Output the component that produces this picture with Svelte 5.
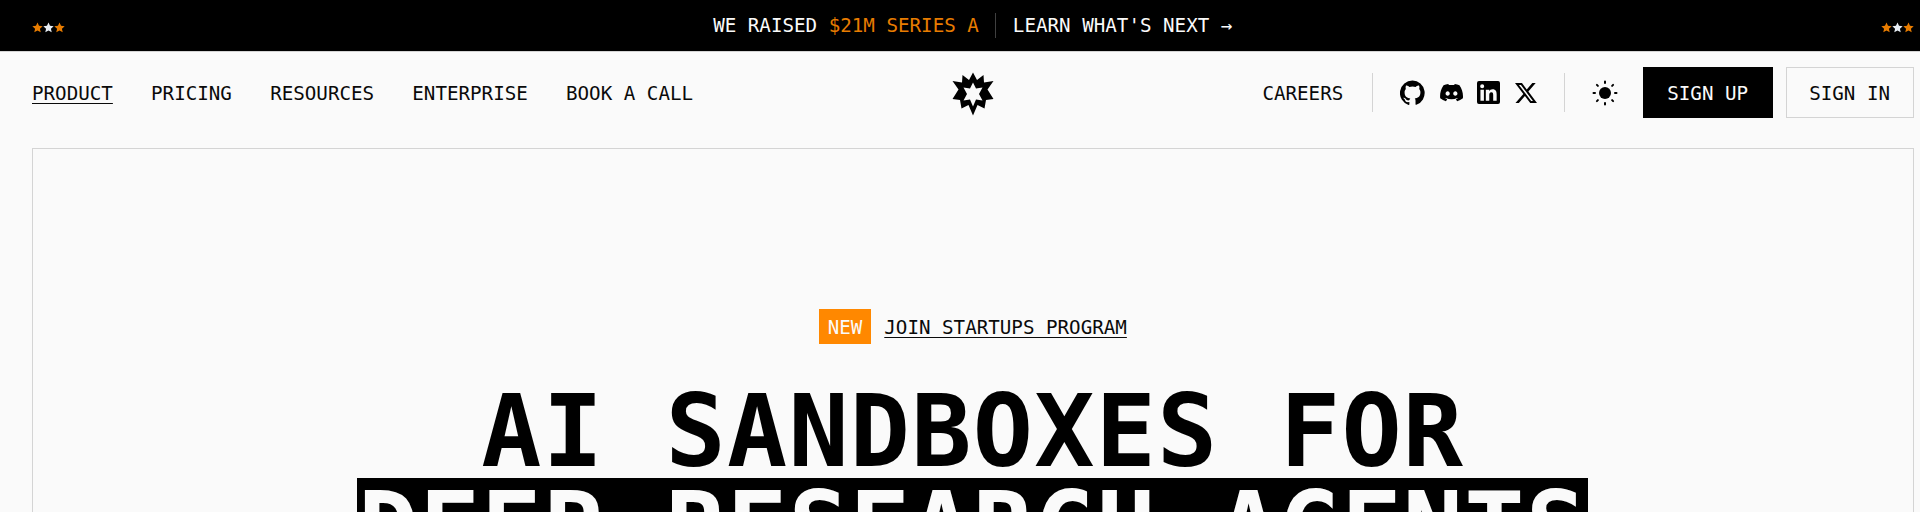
<script>
  const left = ['PRODUCT', 'PRICING', 'RESOURCES', 'ENTERPRISE', 'BOOK A CALL'];
  const starColors = ['#e87c00', '#e8eef5', '#e87c00'];
</script>

{#snippet stars()}
  <span class="stars">
    {#each starColors as c}
      <svg viewBox="0 0 24 24" width="11" height="11" fill={c}><path d="M12 1l3.300 7.400 8 .8-6 5.400 1.700 7.900-7-4.100-7 4.100 1.700-7.900-6-5.400 8-.8z"/></svg>
    {/each}
  </span>
{/snippet}

<div class="page">
  <div class="banner">
    {@render stars()}
    <div class="msg">
      <span>WE RAISED <b>$21M SERIES A</b></span>
      <span class="vr"></span>
      <span>LEARN WHAT'S NEXT →</span>
    </div>
    {@render stars()}
  </div>

  <nav>
    <div class="links">
      {#each left as l, i}
        <a class:active={i === 0} href="#x">{l}</a>
      {/each}
    </div>
    <svg class="logo" viewBox="10.500 5.500 44 46" width="44" height="46" aria-hidden="true">
      <path fill-rule="evenodd" d="M32.500 7L36.500 14.500L43 9.500L43.500 17L53 15.500L47 24L53 33.500L45.500 34.500L44 43L37 39.500L32.500 50L28 39.500L21 43L19.500 34.500L12 33.500L18 24L12 15.500L21.500 17L22 9.500L28.500 14.500ZM32.500 17L29.500 23L23 22L26.500 28.500L23 35L29.500 34L32.500 41L35.500 34L42 35L38.500 28.500L42 22L35.500 23Z"/>
    </svg>
    <div class="right">
      <a class="careers" href="#x">CAREERS</a>
      <span class="sep"></span>
      <div class="social">
        <svg viewBox="0 0 24 24" width="25" height="25"><path d="M12 .5a12 12 0 0 0-3.800 23.400c.6.100.8-.3.800-.6v-2.100c-3.300.7-4-1.600-4-1.600-.5-1.400-1.300-1.800-1.300-1.800-1.100-.7.100-.7.100-.7 1.200.1 1.800 1.200 1.800 1.200 1.100 1.800 2.800 1.300 3.500 1 .1-.8.400-1.300.8-1.600-2.700-.3-5.500-1.300-5.500-5.900 0-1.300.5-2.400 1.200-3.200-.1-.3-.5-1.500.1-3.200 0 0 1-.3 3.300 1.200a11.500 11.500 0 0 1 6 0c2.300-1.500 3.300-1.200 3.300-1.200.7 1.700.2 2.900.1 3.200.8.800 1.200 1.900 1.200 3.200 0 4.600-2.800 5.600-5.500 5.900.4.400.8 1.100.8 2.200v3.300c0 .3.200.7.800.6A12 12 0 0 0 12 .5z"/></svg>
        <svg viewBox="0 0 24 24" width="23" height="23"><path d="M20.300 4.400A19.800 19.800 0 0 0 15.400 3l-.6 1.300a18.300 18.300 0 0 0-5.500 0L8.600 3a19.700 19.700 0 0 0-4.900 1.400C.6 9 -.3 13.600.2 18.100a19.900 19.900 0 0 0 6 3c.5-.7.900-1.300 1.300-2-.7-.3-1.400-.6-2-1l.5-.4a14.200 14.200 0 0 0 12.100 0l.5.400c-.6.400-1.300.7-2 1 .4.700.8 1.300 1.300 2a19.800 19.800 0 0 0 6-3c.5-5.200-.9-9.700-3.600-13.700zM8 15.400c-1.200 0-2.200-1.100-2.200-2.400S6.800 10.600 8 10.600 10.200 11.700 10.200 13 9.200 15.400 8 15.400zm8 0c-1.200 0-2.200-1.100-2.200-2.400s1-2.400 2.200-2.400 2.200 1.100 2.200 2.400-1 2.400-2.200 2.400z"/></svg>
        <svg viewBox="0 0 24 24" width="23" height="23"><path fill-rule="evenodd" d="M2 0h20a2 2 0 0 1 2 2v20a2 2 0 0 1-2 2H2a2 2 0 0 1-2-2V2a2 2 0 0 1 2-2zM3.600 9v11.500h3.600V9zM5.400 3.400a2.100 2.100 0 1 0 0 4.200 2.100 2.100 0 0 0 0-4.200zM9.200 9v11.500h3.600v-5.700c0-1.500.3-3 2.200-3s1.900 1.800 1.900 3.100v5.600h3.600v-6.300c0-3.100-.7-5.500-4.300-5.500-1.700 0-2.900 1-3.400 1.900V9z"/></svg>
        <svg viewBox="0 0 24 24" width="22" height="22"><path fill-rule="evenodd" d="M18.900 1.200h3.700l-8 9.200L24 22.800h-7.400l-5.800-7.600-6.600 7.600H.5l8.600-9.800L0 1.200h7.600l5.200 6.900zM17.600 20.600h2L6.500 3.300H4.300z"/></svg>
      </div>
      <span class="sep"></span>
      <svg class="sun" viewBox="0 0 26 26" width="26" height="26">
        <circle cx="13" cy="13" r="6"/>
        <path stroke="#000" stroke-width="2" stroke-linecap="round" d="M13 1.500v1.500M13 23v1.500M1.500 13H3M23 13h1.500M4.900 4.900l1 1M20.100 20.100l1 1M4.900 21.100l1-1M20.100 5.900l1-1"/>
      </svg>
      <a class="btn dark" href="#x">SIGN UP</a>
      <a class="btn light" href="#x">SIGN IN</a>
    </div>
  </nav>

  <section class="hero">
    <div class="pill">
      <span class="new">NEW</span>
      <a href="#x">JOIN STARTUPS PROGRAM</a>
    </div>
    <h1>AI SANDBOXES FOR<br /><span class="hl">DEEP RESEARCH AGENTS</span></h1>
  </section>
</div>

<style>
  :global(body) {
    margin: 0;
    background: #fafafa;
    overflow: hidden;
  }
  .page {
    height: 512px;
    overflow: hidden;
    font-family: "DejaVu Sans Mono", "Liberation Mono", monospace;
    font-size: 19.2px;
    color: #0a0a0a;
  }
  a {
    color: inherit;
    text-decoration: none;
  }
  .banner {
    height: 52px;
    box-sizing: border-box;
    background: #000;
    border-bottom: 1px solid #d4d4d4;
    padding: 0 6.500px 0 32px;
    display: flex;
    align-items: center;
    justify-content: space-between;
    color: #fafafa;
  }
  .stars {
    display: flex;
    width: 33px;
    padding-top: 3px;
  }
  .msg {
    display: flex;
    align-items: center;
    gap: 16.500px;
    line-height: 25px;
  }
  .msg b {
    font-weight: 400;
    color: #e87c00;
  }
  .vr {
    width: 1px;
    height: 25px;
    background: #404040;
  }
  nav {
    height: 96px;
    box-sizing: border-box;
    padding: 15px 6.500px 30px 32px;
    display: grid;
    grid-template-columns: 1fr auto 1fr;
    align-items: center;
  }
  .links {
    display: flex;
    gap: 38.200px;
    padding-top: 2px;
  }
  .links a.active {
    text-decoration: underline;
    text-underline-offset: 3px;
  }
  .logo {
    margin: 2px 0 0;
    height: 46px;
  }
  .right {
    display: flex;
    align-items: center;
    justify-content: flex-end;
  }
  .careers {
    padding-top: 2px;
    margin-right: 1px;
  }
  .sep {
    width: 1px;
    height: 39px;
    background: #d4d4d4;
    margin: 0 27.500px;
  }
  .social {
    display: flex;
    align-items: center;
    gap: 14.500px;
  }
  .sun {
    margin: 1px 25px 0 -1px;
  }
  .btn {
    height: 51px;
    box-sizing: border-box;
    display: flex;
    align-items: center;
    padding-top: 2px;
    border: 1px solid #000;
  }
  .btn.dark {
    background: #000;
    color: #fafafa;
    padding-inline: 23.500px;
  }
  .btn.light {
    margin-left: 13px;
    border-color: #d4d4d4;
    padding-inline: 22.500px;
  }
  .hero {
    margin: 0 6.500px 0 32px;
    border: 1px solid #d4d4d4;
    border-bottom: 0;
    height: 364px;
    display: flex;
    flex-direction: column;
    align-items: center;
    padding-top: 160px;
    box-sizing: border-box;
  }
  .pill {
    display: flex;
    align-items: center;
    gap: 13px;
    height: 35px;
  }
  .new {
    background: #ff8800;
    color: #fafafa;
    padding: 0 9px;
    height: 35px;
    line-height: 37px;
  }
  .pill a {
    text-decoration: underline;
    text-underline-offset: 3px;
    padding-top: 2px;
  }
  h1 {
    margin: 39px 0 0;
    font-size: 100px;
    letter-spacing: 1.240px;
    line-height: 97px;
    font-weight: 700;
    text-align: center;
    white-space: nowrap;
    color: #000;
  }
  .hl {
    display: inline-block;
    background: #000;
    color: #fafafa;
    margin-top: -2px;
    padding: 2px 1px 0;
  }
</style>
